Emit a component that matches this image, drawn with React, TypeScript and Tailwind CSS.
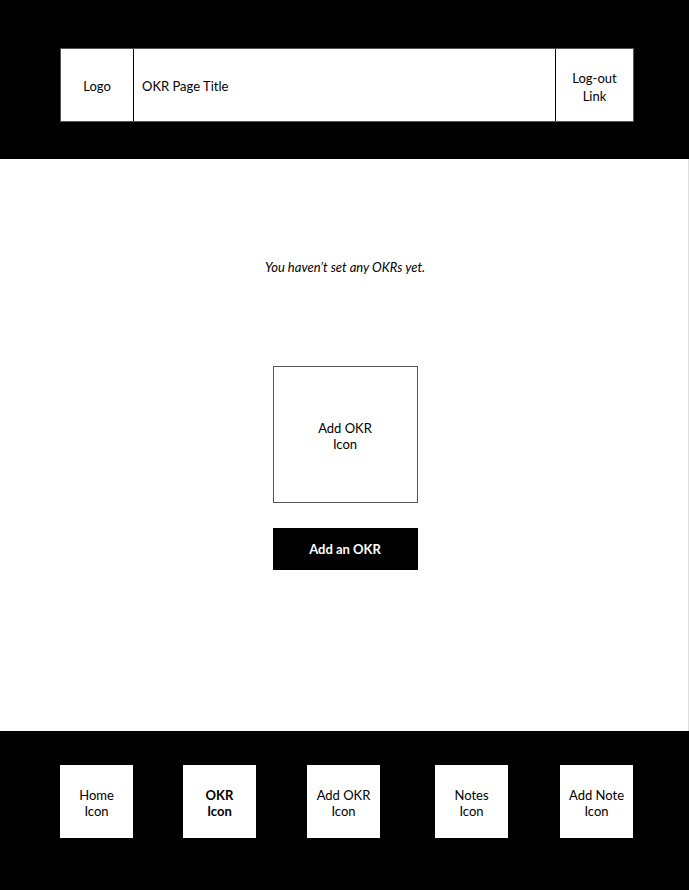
const font = { fontFamily: 'Lato, "Open Sans", sans-serif' }

const NAV = [
  { label: ['Home', 'Icon'], bold: false, gap: '' },
  { label: ['OKR', 'Icon'], bold: true, gap: 'ml-[50px]' },
  { label: ['Add OKR', 'Icon'], bold: false, gap: 'ml-[51px]' },
  { label: ['Notes', 'Icon'], bold: false, gap: 'ml-[55px]' },
  { label: ['Add Note', 'Icon'], bold: false, gap: 'ml-[52px]' },
]

function NavBox({ label, bold, gap }: { label: string[]; bold: boolean; gap: string }) {
  return (
    <div
      className={`flex h-[73px] w-[73px] flex-col items-center justify-center bg-white pt-[2px] text-[13px] leading-[16px] text-black ${bold ? 'font-bold' : ''} ${gap}`}
    >
      {label.map(l => (
        <span key={l}>{l}</span>
      ))}
    </div>
  )
}

export default function App() {
  return (
    <div className="flex h-[890px] w-[689px] flex-col bg-white text-black" style={font}>
      <header className="h-[159px] shrink-0 bg-black pl-[60px] pr-[55px] pt-[48px]">
        <div className="flex h-[74px] border border-[#555] bg-white text-[13px]">
          <div className="flex w-[73px] items-center justify-center border-r border-black pt-[4px]">Logo</div>
          <div className="flex flex-1 items-center border-r border-black pl-[8px] pt-[4px]">OKR Page Title</div>
          <div className="flex w-[77px] flex-col items-center justify-center pt-[3px] leading-[18px]">
            <span>Log-out</span>
            <span>Link</span>
          </div>
        </div>
      </header>

      <main className="flex flex-1 flex-col items-center border-r border-[#ddd] pl-[2px]">
        <p className="mt-[99px] text-[13px] italic">You haven’t set any OKRs yet.</p>
        <div className="mt-[88px] flex h-[137px] w-[145px] flex-col items-center justify-center border border-[#555] pt-[3px] text-[13px] leading-[16px]">
          <span>Add OKR</span>
          <span>Icon</span>
        </div>
        <button className="mt-[25px] flex h-[42px] w-[145px] items-center justify-center bg-black pt-[3px] text-[13px] font-bold text-white">
          Add an OKR
        </button>
      </main>

      <footer className="flex h-[159px] shrink-0 items-start bg-black pl-[60px] pt-[34px]">
        {NAV.map(n => (
          <NavBox key={n.label.join(' ')} label={n.label} bold={n.bold} gap={n.gap} />
        ))}
      </footer>
    </div>
  )
}
